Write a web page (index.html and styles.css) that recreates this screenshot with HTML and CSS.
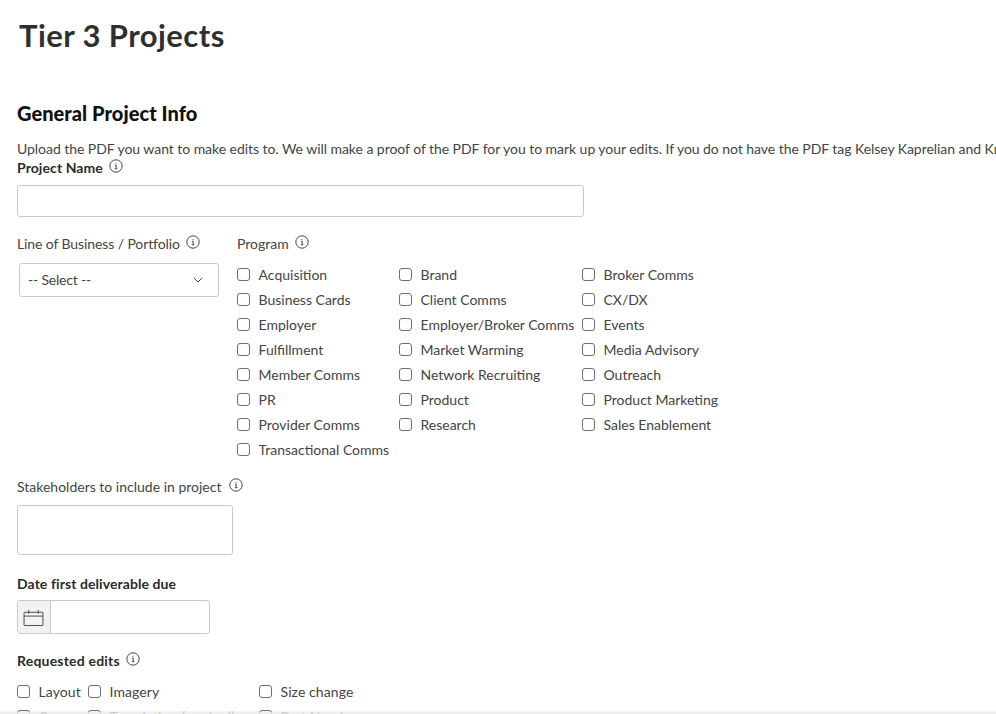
FILE: index.html
```html
<!DOCTYPE html>
<html lang="en">
<head>
<meta charset="utf-8">
<title>Tier 3 Projects</title>
<link rel="stylesheet" href="styles.css">
</head>
<body>
<svg class="defs" width="0" height="0" aria-hidden="true">
  <symbol id="info" viewBox="0 0 14 14">
    <circle cx="7" cy="7" r="6.2" fill="none" stroke="currentColor" stroke-width="1"/>
    <path d="M6 6.2h1.2v3.4M5.8 9.7h2.6M7 4v.9" fill="none" stroke="currentColor" stroke-width="1"/>
  </symbol>
</svg>
<main class="page">
  <h1 class="title">Tier 3 Projects</h1>
  <h2 class="section">General Project Info</h2>
  <p class="desc">Upload the PDF you want to make edits to. We will make a proof of the PDF for you to mark up your edits. If you do not have the PDF tag Kelsey Kaprelian and Kristin Smith in the comments below.</p>

  <div class="label bold name-label">Project Name <svg class="info"><use href="#info"/></svg></div>
  <input class="text name-input" type="text">

  <div class="split">
    <div class="lob">
      <div class="label lob-label">Line of Business / Portfolio <svg class="info"><use href="#info"/></svg></div>
      <div class="select">
        <span class="select-text">-- Select --</span>
        <svg class="chev" viewBox="0 0 10 6"><path d="M.7.7 5 5 9.300.7" fill="none" stroke="currentColor" stroke-width="1"/></svg>
      </div>
    </div>
    <div class="program">
      <div class="label program-label">Program <svg class="info"><use href="#info"/></svg></div>
      <div class="checks">
        <label class="check"><input type="checkbox">Acquisition</label>
        <label class="check"><input type="checkbox">Brand</label>
        <label class="check"><input type="checkbox">Broker Comms</label>
        <label class="check"><input type="checkbox">Business Cards</label>
        <label class="check"><input type="checkbox">Client Comms</label>
        <label class="check"><input type="checkbox">CX/DX</label>
        <label class="check"><input type="checkbox">Employer</label>
        <label class="check"><input type="checkbox">Employer/Broker Comms</label>
        <label class="check"><input type="checkbox">Events</label>
        <label class="check"><input type="checkbox">Fulfillment</label>
        <label class="check"><input type="checkbox">Market Warming</label>
        <label class="check"><input type="checkbox">Media Advisory</label>
        <label class="check"><input type="checkbox">Member Comms</label>
        <label class="check"><input type="checkbox">Network Recruiting</label>
        <label class="check"><input type="checkbox">Outreach</label>
        <label class="check"><input type="checkbox">PR</label>
        <label class="check"><input type="checkbox">Product</label>
        <label class="check"><input type="checkbox">Product Marketing</label>
        <label class="check"><input type="checkbox">Provider Comms</label>
        <label class="check"><input type="checkbox">Research</label>
        <label class="check"><input type="checkbox">Sales Enablement</label>
        <label class="check"><input type="checkbox">Transactional Comms</label>
      </div>
    </div>
  </div>

  <div class="label stake-label">Stakeholders to include in project <svg class="info"><use href="#info"/></svg></div>
  <textarea class="text stake"></textarea>

  <div class="label bold date-label">Date first deliverable due</div>
  <div class="date">
    <span class="addon">
      <svg class="cal" viewBox="0 0 22 18"><path d="M1.500 3.500h19a.5.5 0 0 1 .5.500v13a.5.5 0 0 1-.5.500h-19a.5.5 0 0 1-.5-.500V4a.5.5 0 0 1 .5-.500ZM1 7.500h20M6 1v4M16 1v4" fill="none" stroke="currentColor" stroke-width="1"/></svg>
    </span>
  </div>

  <div class="label bold req-label">Requested edits <svg class="info"><use href="#info"/></svg></div>
  <div class="edits">
    <label class="check"><input type="checkbox">Layout</label>
    <label class="check"><input type="checkbox">Imagery</label>
    <label class="check"><input type="checkbox">Size change</label>
    <label class="check"><input type="checkbox">Copy</label>
    <label class="check"><input type="checkbox">Translation (marked)</label>
    <label class="check"><input type="checkbox">Part Number</label>
  </div>
</main>
<div class="bottom-edge"></div>
</body>
</html>
```
FILE: styles.css
```css
* { box-sizing: border-box; }
html, body { margin: 0; height: 714px; overflow: hidden; background: #fff; }
body { font-family: "Lato", "Liberation Sans", sans-serif; color: #444; font-size: 14px; }
.defs { position: absolute; }
.page { padding-left: 17px; }
.title { margin: 0 0 0 2px; padding-top: 17px; font-size: 31px; line-height: 36px; font-weight: 700; color: #2f2f2f; letter-spacing: .43px; }
.section { margin: 0; padding-top: 49px; font-size: 20px; line-height: 23px; font-weight: 900; color: #111; letter-spacing: .05px; }
.desc { margin: 15px 0 0; width: 1200px; font-size: 14px; line-height: 17px; white-space: nowrap; letter-spacing: -.05px; }
.label { font-size: 14px; line-height: 17px; display: flex; align-items: center; gap: 6px; }
.bold { font-weight: 700; color: #2b2b2b; letter-spacing: .08px; }
.info { width: 14px; height: 14px; color: #444; margin-top: -3px; }
.name-label { margin-top: 2px; }
.text { display: block; border: 1px solid #c9c9c9; border-radius: 3px; background: #fff; }
.name-input { width: 567px; height: 32px; margin-top: 9px; }
.split { display: flex; margin-top: 18px; }
.lob { width: 220px; }
.lob-label { letter-spacing: -.1px; }
.select { display: flex; align-items: center; justify-content: space-between; width: 200px; height: 34px; margin: 11px 0 0 2px; padding: 0 15px 0 8px; border: 1px solid #c9c9c9; border-radius: 3px; letter-spacing: -.2px; }
.select-text { margin-top: -2px; }
.chev { width: 10px; height: 6px; }
.program-label { margin-bottom: 10px; }
.checks { display: grid; grid-template-columns: 162px 183px auto; grid-auto-rows: 25px; justify-content: start; }
.check { display: flex; align-items: center; gap: 8.500px; height: 25px; white-space: nowrap; }
.check input { appearance: none; width: 13px; height: 13px; margin: 0; flex: none; border: 1px solid #6f6f6f; border-radius: 3px; background: #fff; }
.stake-label { margin-top: 16px; gap: 8px; }
.stake { width: 216px; height: 50px; margin-top: 10px; resize: none; }
.date-label { margin-top: 20px; }
.date { display: flex; width: 193px; height: 34px; margin-top: 8px; border: 1px solid #c9c9c9; border-radius: 3px; overflow: hidden; }
.addon { display: flex; align-items: center; justify-content: center; width: 33px; padding-right: 2px; background: #f2f2f2; border-right: 1px solid #c9c9c9; }
.cal { width: 21px; height: 17px; color: #444; flex: none; }
.req-label { margin-top: 18px; letter-spacing: .2px; }
.edits { display: grid; grid-template-columns: 71px 171px auto; grid-auto-rows: 25px; justify-content: start; margin-top: 10px; letter-spacing: .1px; }
.bottom-edge { position: fixed; left: 0; right: 0; bottom: 0; height: 2px; background: rgba(235,235,235,.8); box-shadow: 0 -1px 1px rgba(0,0,0,.05); }
```
